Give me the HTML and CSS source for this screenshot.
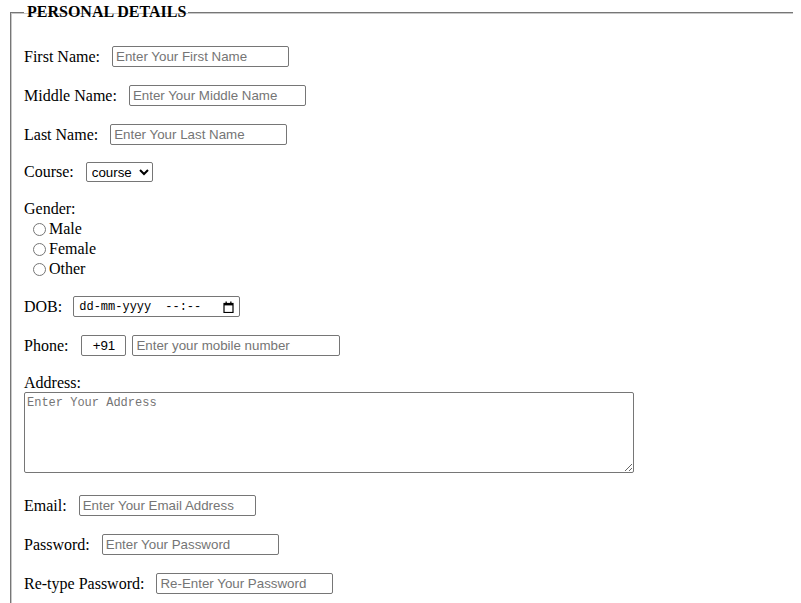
FILE: index.html
```html
<!DOCTYPE html>
<html>
<head>
<meta charset="utf-8">
<link rel="stylesheet" href="styles.css">
</head>
<body>
<form class="form">
  <fieldset class="box">
    <legend class="title">PERSONAL DETAILS</legend>
    <div class="rows">
      <div class="row"><label class="lbl">First Name:</label><input class="txt" type="text" placeholder="Enter Your First Name"></div>
      <div class="row"><label class="lbl">Middle Name:</label><input class="txt" type="text" placeholder="Enter Your Middle Name"></div>
      <div class="row"><label class="lbl">Last Name:</label><input class="txt" type="text" placeholder="Enter Your Last Name"></div>
      <div class="row row-sel"><label class="lbl">Course:</label><select class="sel"><option>course</option></select></div>
      <div class="gender">
        <div class="gline">Gender:</div>
        <label class="radio"><input type="radio" name="g" class="rad">Male</label>
        <label class="radio"><input type="radio" name="g" class="rad">Female</label>
        <label class="radio"><input type="radio" name="g" class="rad">Other</label>
      </div>
      <div class="row"><label class="lbl">DOB:</label>
        <div class="dob">
          <span class="dob-date">dd-mm-yyyy</span><span class="dob-time">--:--</span>
          <svg class="cal" width="11" height="12" viewBox="0 0 11 12" aria-hidden="true">
            <rect x="1" y="2.5" width="9" height="9" fill="none" stroke="#000" stroke-width="1.2"/>
            <rect x="1" y="2" width="9" height="2.4" fill="#000"/>
            <rect x="2.5" y="0.5" width="1.3" height="2" fill="#000"/>
            <rect x="7.2" y="0.5" width="1.3" height="2" fill="#000"/>
          </svg>
        </div>
      </div>
      <div class="row"><label class="lbl">Phone:</label><input class="code" type="text" value="+91"><input class="phone" type="text" placeholder="Enter your mobile number"></div>
      <div class="addr">
        <div class="gline">Address:</div>
        <textarea class="area" placeholder="Enter Your Address"></textarea>
      </div>
      <div class="row"><label class="lbl">Email:</label><input class="txt" type="email" placeholder="Enter Your Email Address"></div>
      <div class="row"><label class="lbl">Password:</label><input class="txt" type="password" placeholder="Enter Your Password"></div>
      <div class="row"><label class="lbl">Re-type Password:</label><input class="txt" type="password" placeholder="Re-Enter Your Password"></div>
    </div>
  </fieldset>
</form>
</body>
</html>
```

FILE: styles.css
```css
html {
  overflow: hidden;
}
body {
  margin: 3px 8px 8px 8px;
  font-family: "Liberation Serif", "Times New Roman", serif;
  font-size: 16px;
  color: #000;
  background: #fff;
}
.form {
  margin: 0;
}
.box {
  margin: 0 0 0 2px;
  width: 840px;
  border-color: #767676;
  border-width: 1px 0 0 1px;
  border-style: solid;
  box-shadow: inset 1px 1px 0 #c8c8c8;
  padding: 0 12px 40px 13px;
}
.title {
  font-weight: bold;
  font-size: 16px;
  line-height: 18px;
  padding: 0 2px 0 3px;
  margin-left: 0;
}
.rows {
  padding-top: 25px;
  display: flex;
  flex-direction: column;
  gap: 18px;
}
.row {
  display: flex;
  align-items: center;
  height: 21px;
}
.row-sel {
  height: 20px;
  margin-top: -1px;
  margin-bottom: 1px;
}
.lbl {
  margin-right: 12px;
  white-space: nowrap;
}
input, select, textarea {
  margin: 0;
  font-family: "Liberation Sans", Arial, sans-serif;
  font-size: 13.33px;
}
.txt, .code, .phone {
  height: 21px;
  box-sizing: border-box;
  border: 1px solid #767676;
  border-radius: 2px;
  padding: 1px 3px;
  color: #000;
  background: #fff;
}
.txt {
  width: 177px;
}
input::placeholder, textarea::placeholder {
  color: #757575;
}
.code {
  width: 45px;
  text-align: center;
  margin-left: 1px;
}
.phone {
  width: 208px;
  margin-left: 6px;
}
.dob {
  display: flex;
  align-items: center;
  height: 21px;
  width: 167px;
  box-sizing: border-box;
  border: 1px solid #767676;
  border-radius: 2px;
  padding: 0 5px 0 5px;
  margin-left: -1px;
  font-family: "Liberation Mono", "Courier New", monospace;
  font-size: 12px;
  color: #000;
  background: #fff;
}
.dob-date {
  white-space: pre;
}
.dob-time {
  margin-left: 14px;
  white-space: pre;
}
.cal {
  margin-left: auto;
  display: block;
}
.sel {
  height: 20px;
  width: 67px;
  box-sizing: border-box;
  border: 1px solid #767676;
  border-radius: 2px;
  background: #fff;
  color: #000;
  padding: 0 0 0 1px;
}
.gender {
  display: flex;
  flex-direction: column;
  margin-top: -1px;
  margin-bottom: -1px;
}
.gline {
  line-height: 18px;
}
.radio {
  display: flex;
  align-items: center;
  height: 20px;
  padding-left: 9px;
}
.radio:first-of-type {
  margin-top: 1px;
}
.rad {
  width: 13px;
  height: 13px;
  margin: 0 3px 0 0;
}
.addr {
  display: flex;
  flex-direction: column;
  margin-bottom: 4px;
}
.area {
  width: 610px;
  height: 81px;
  box-sizing: border-box;
  border: 1px solid #767676;
  border-radius: 2px;
  padding: 3px 2px 2px 2px;
  font-family: "Liberation Mono", "Courier New", monospace;
  font-size: 12px;
  line-height: 15px;
  resize: both;
}
```
